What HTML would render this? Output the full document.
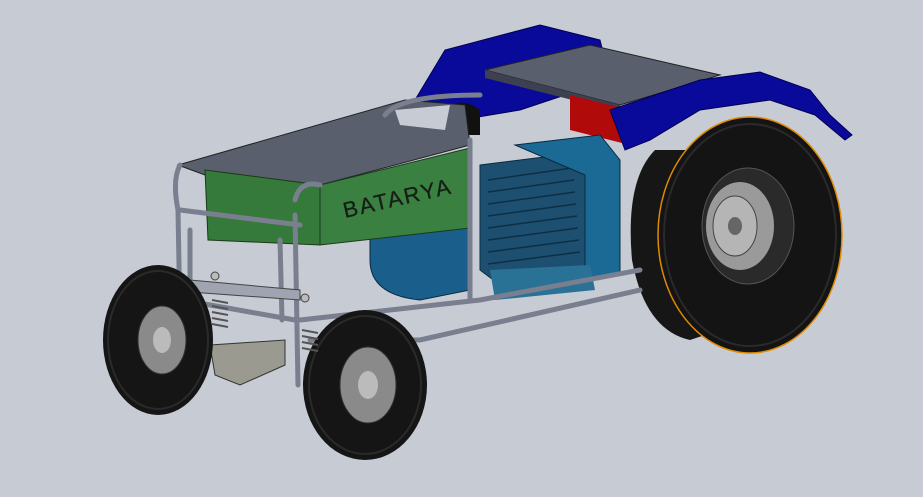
<!DOCTYPE html>
<html><head><meta charset="utf-8"><style>
html,body{margin:0;padding:0;background:#c7cbd4;width:923px;height:497px;overflow:hidden}
svg{display:block}
</style></head><body>
<svg width="923" height="497" viewBox="0 0 923 497" xmlns="http://www.w3.org/2000/svg">
<rect width="923" height="497" fill="#c7cbd4"/>
<!-- rear blue fender left (behind) -->
<path d="M415,100 L445,50 L540,25 L600,40 L610,80 L520,110 L460,120 Z" fill="#0a0a9a" stroke="#000050" stroke-width="1"/>
<path d="M445,110 Q460,95 480,110 L480,135 L450,135 Z" fill="#111"/>
<!-- rear top gray plate -->
<path d="M485,70 L590,45 L720,75 L620,105 Z" fill="#5a5f6e" stroke="#222" stroke-width="1"/>
<path d="M485,70 L620,105 L620,112 L485,78 Z" fill="#3c4050"/>
<!-- red block -->
<path d="M570,95 L630,110 L630,145 L570,130 Z" fill="#b00a0a"/>
<!-- right blue fender -->
<path d="M610,110 L700,80 L760,72 L810,90 L830,115 L852,135 L845,140 L815,115 L770,100 L700,110 L650,140 L625,150 Z" fill="#0a0a9a" stroke="#000050"/>
<!-- inner left rear tire -->
<path d="M655,150 Q625,180 632,260 Q645,330 690,340 L720,330 L690,150 Z" fill="#161616"/>
<!-- big rear wheel -->
<ellipse cx="750" cy="235" rx="92" ry="118" fill="#141414" stroke="#e08a00" stroke-width="1.5"/>
<ellipse cx="750" cy="235" rx="86" ry="111" fill="none" stroke="#2a2a2a" stroke-width="2"/>
<ellipse cx="748" cy="226" rx="46" ry="58" fill="#2a2a2a" stroke="#555"/>
<ellipse cx="740" cy="226" rx="34" ry="44" fill="#9a9a9a"/>
<ellipse cx="735" cy="226" rx="22" ry="30" fill="#b5b5b5" stroke="#444"/>
<ellipse cx="735" cy="226" rx="7" ry="9" fill="#666"/>
<!-- front top gray plate -->
<path d="M178,165 L405,100 L465,105 L470,145 L320,185 L205,175 Z" fill="#5a5f6e" stroke="#222"/>
<path d="M395,110 L450,105 L445,130 L400,125 Z" fill="#c7cbd4"/>
<!-- motor -->
<path d="M370,225 Q380,195 420,200 L470,230 L470,290 L420,300 Q370,295 370,260 Z" fill="#1a5f8c" stroke="#0a2a40"/>
<path d="M480,165 L560,155 L585,175 L590,270 L500,285 L480,270 Z" fill="#1d5070" stroke="#0a2a40"/>
<g stroke="#0e2e44" stroke-width="1.5">
<path d="M488,180 L572,168 M488,192 L574,180 M488,204 L575,192 M488,216 L576,204 M488,228 L577,216 M488,240 L578,228 M488,252 L579,240 M488,264 L580,252"/>
</g>
<path d="M515,145 L600,135 L620,160 L620,275 L585,280 L585,175 Z" fill="#1b6a96" stroke="#0a2a40"/>
<path d="M490,270 L590,265 L595,290 L495,300 Z" fill="#2a7196"/>
<!-- green battery -->
<path d="M205,170 L320,185 L320,245 L208,240 Z" fill="#357a3a" stroke="#1a3a1a"/>
<path d="M320,185 L470,148 L470,228 L320,245 Z" fill="#3a8040" stroke="#1a3a1a"/>
<text x="345" y="218" font-family="Liberation Sans, sans-serif" font-size="22" fill="#1a1a1a" stroke="#0e2a10" stroke-width="0.3" transform="rotate(-13 345 218)" letter-spacing="2">BATARYA</text>
<!-- frame tubes -->
<g stroke="#7a7f90" stroke-width="5" fill="none" stroke-linecap="round">
<path d="M180,165 Q172,180 178,210 L180,320"/>
<path d="M295,215 L298,385"/>
<path d="M180,210 L300,225"/>
<path d="M182,300 L295,320"/>
<path d="M300,320 L480,300 L640,270"/>
<path d="M310,340 L420,340 L640,290"/>
<path d="M470,140 L470,300"/>
<path d="M295,200 Q300,180 320,185"/>
<path d="M385,115 Q400,95 480,95"/>
<path d="M190,230 L190,300"/>
<path d="M280,240 L282,320"/>
</g>
<!-- suspension bar -->
<path d="M190,280 L300,290 L300,300 L190,292 Z" fill="#a0a4b0" stroke="#444"/>
<circle cx="215" cy="276" r="4" fill="#bbb" stroke="#444"/>
<circle cx="305" cy="298" r="4" fill="#bbb" stroke="#444"/>
<path d="M210,345 L285,340 L285,365 L240,385 L215,375 Z" fill="#9a9a90" stroke="#333"/>
<!-- front left wheel -->
<ellipse cx="158" cy="340" rx="55" ry="75" fill="#151515"/>
<ellipse cx="158" cy="340" rx="50" ry="69" fill="none" stroke="#2a2a2a" stroke-width="2"/>
<ellipse cx="162" cy="340" rx="24" ry="34" fill="#8a8a8a" stroke="#333"/>
<ellipse cx="162" cy="340" rx="9" ry="13" fill="#bbb"/>
<!-- front right wheel -->
<ellipse cx="365" cy="385" rx="62" ry="75" fill="#151515"/>
<ellipse cx="365" cy="385" rx="56" ry="69" fill="none" stroke="#2a2a2a" stroke-width="2"/>
<ellipse cx="368" cy="385" rx="28" ry="38" fill="#8a8a8a" stroke="#333"/>
<ellipse cx="368" cy="385" rx="10" ry="14" fill="#bbb"/>
<!-- springs -->
<g stroke="#555" stroke-width="2">
<path d="M212,300 L228,303 M212,306 L228,309 M212,312 L228,315 M212,318 L228,321 M212,324 L228,327"/>
<path d="M302,330 L318,333 M302,336 L318,339 M302,342 L318,345 M302,348 L318,351"/>
</g>
</svg>
</body></html>
